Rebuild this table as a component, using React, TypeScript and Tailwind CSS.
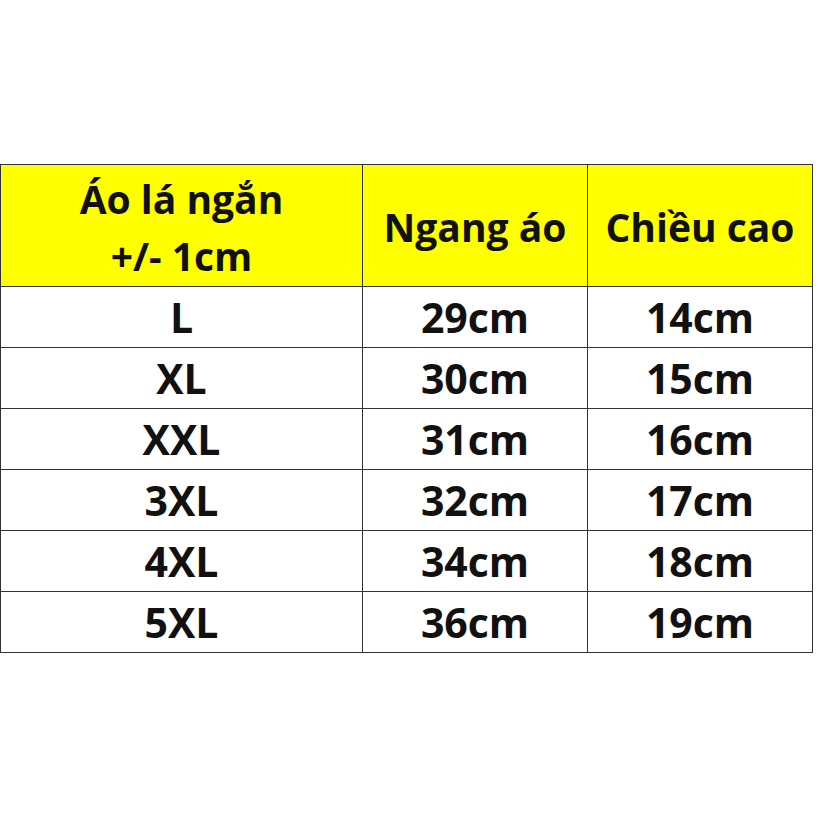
const rows = [
  { size: 'L', width: '29cm', height: '14cm' },
  { size: 'XL', width: '30cm', height: '15cm' },
  { size: 'XXL', width: '31cm', height: '16cm' },
  { size: '3XL', width: '32cm', height: '17cm' },
  { size: '4XL', width: '34cm', height: '18cm' },
  { size: '5XL', width: '36cm', height: '19cm' },
]

export default function App() {
  return (
    <div className="h-[818px] w-[818px] bg-white pt-[164px] font-['Open_Sans',_sans-serif] text-[#111]">
      <table className="w-[812px] table-fixed border-collapse">
        <colgroup>
          <col className="w-[362px]" />
          <col className="w-[225px]" />
          <col className="w-[225px]" />
        </colgroup>
        <thead>
          <tr className="h-[122px] bg-[#ffff00]">
            <th className="border border-[#333] pt-[3px] text-[39px] font-bold leading-[57px]">
              Áo lá ngắn
              <br />
              +/- 1cm
            </th>
            <th className="border border-[#333] pt-1 text-[39px] font-bold">Ngang áo</th>
            <th className="border border-[#333] pt-1 text-[39px] font-bold">Chiều cao</th>
          </tr>
        </thead>
        <tbody>
          {rows.map((r) => (
            <tr key={r.size} className="h-[61px]">
              <td className="border border-[#333] pt-px text-center text-[41px] font-bold leading-none">{r.size}</td>
              <td className="border border-[#333] pt-px text-center text-[41px] font-bold leading-none">{r.width}</td>
              <td className="border border-[#333] pt-px text-center text-[41px] font-bold leading-none">{r.height}</td>
            </tr>
          ))}
        </tbody>
      </table>
    </div>
  )
}
